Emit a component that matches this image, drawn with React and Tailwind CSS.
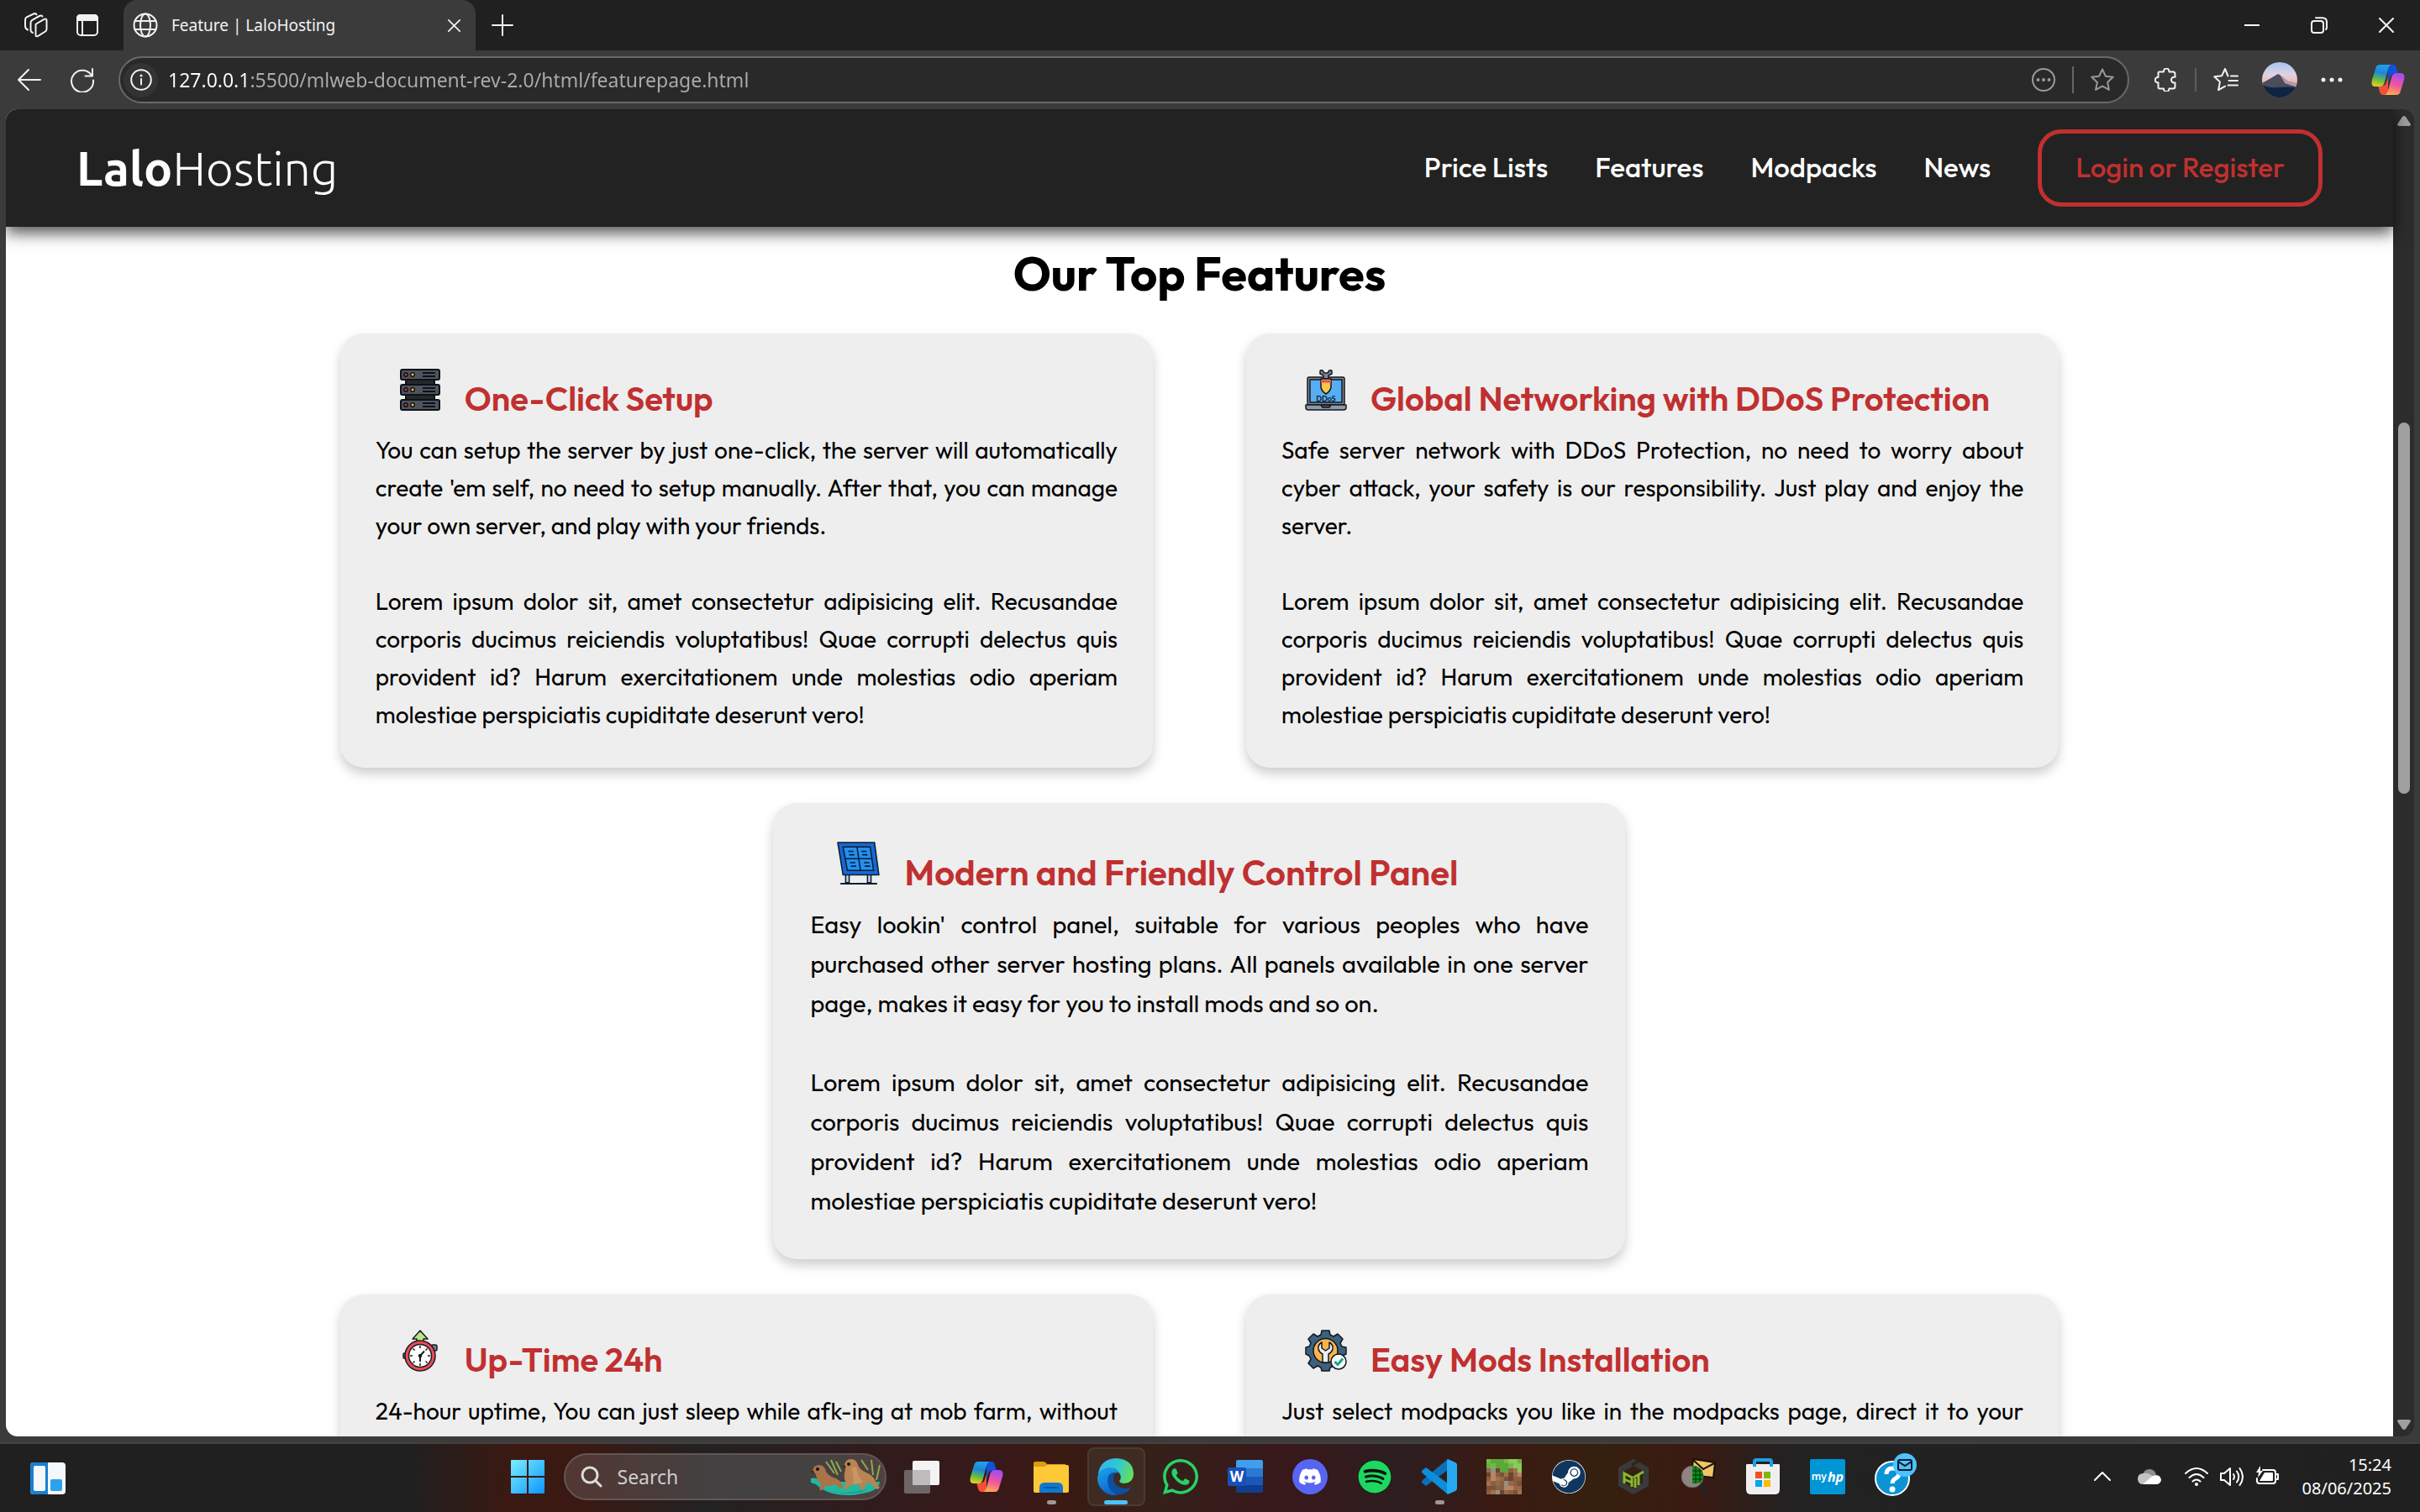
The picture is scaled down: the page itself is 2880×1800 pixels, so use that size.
import React from "react";
import { FaDiscord, FaSpotify, FaWhatsapp, FaSteam } from "react-icons/fa";

const LOREM =
  "Lorem ipsum dolor sit, amet consectetur adipisicing elit. Recusandae corporis ducimus reiciendis voluptatibus! Quae corrupti delectus quis provident id? Harum exercitationem unde molestias odio aperiam molestiae perspiciatis cupiditate deserunt vero!";

/* ---------- line icons of the browser ---------- */

function Line({ size = 28, box = 28, sw = 2, className = "", children }) {
  return (
    <svg
      width={size}
      height={size}
      viewBox={`0 0 ${box} ${box}`}
      fill="none"
      stroke="currentColor"
      strokeWidth={sw}
      strokeLinecap="round"
      strokeLinejoin="round"
      className={className}
      aria-hidden="true"
    >
      {children}
    </svg>
  );
}

const Workspaces = () => (
  <Line size={30} box={30}>
    <path d="M15 13.500 24.500 7.800q3-1.300 3 1.500v10.200q0 2-1.600 3l-8.200 5.200q-3.200 1.800-3.200-1.500V15q0-1 .500-1.500z" />
    <path d="M11 24q-2.500-.8-2.500-3.500V12q0-2 1.800-3.200L19 4q2.200-1 3.500.500" />
    <path d="M5 20.500Q2 19 2 16V8.500q0-2 1.800-3.200L12 1.500q2.500-1 3.500.700" />
  </Line>
);

const TabActions = () => (
  <Line size={28}>
    <rect x="2" y="2" width="24" height="24" rx="4" />
    <path d="M2 8V6q0-4 4-4h16q4 0 4 4v2z" fill="currentColor" />
    <path d="M8 8v18" />
  </Line>
);

const Globe = () => (
  <Line size={30} box={30}>
    <circle cx="15" cy="15" r="13.500" />
    <ellipse cx="15" cy="15" rx="6" ry="13.500" />
    <path d="M2.500 10h25M2.500 20h25" />
  </Line>
);

const Cross = ({ size = 18 }) => (
  <Line size={size} box={18}>
    <path d="M1 1l16 16M17 1 1 17" />
  </Line>
);

const Plus = () => (
  <Line size={26} box={26}>
    <path d="M13 1v24M1 13h24" />
  </Line>
);

const Restore = () => (
  <Line size={20} box={20}>
    <rect x="1" y="5" width="14" height="14" rx="3" />
    <path d="M6 1.200h8q5 0 5 5v6.800q0 1-1 2" />
  </Line>
);

const Back = () => (
  <Line size={30} box={30}>
    <path d="M28 15H2M14 3 2 15l12 12" />
  </Line>
);

const Reload = () => (
  <Line size={30} box={30}>
    <path d="M26.500 10.500A13 13 0 1 0 28 15.500M27 2v8.500h-8.500" />
  </Line>
);

const Info = () => (
  <Line size={26} box={26}>
    <circle cx="13" cy="13" r="11.800" />
    <path d="M13 12v6.500" />
    <circle cx="13" cy="8" r=".6" fill="currentColor" />
  </Line>
);

const MoreCircle = () => (
  <Line>
    <circle cx="14" cy="14" r="13" />
    <g fill="currentColor" stroke="none">
      <circle cx="7.500" cy="14" r="2" />
      <circle cx="14" cy="14" r="2" />
      <circle cx="20.500" cy="14" r="2" />
    </g>
  </Line>
);

const Star = () => (
  <Line>
    <path d="M14 1.500l3.800 8.200 8.900 1.100-6.600 6.100 1.800 9L14 21.500l-7.900 4.400 1.800-9L1.300 10.800l8.900-1.100z" />
  </Line>
);

const Extensions = () => (
  <Line>
    <path d="M6 4.500h5v-.7a3.200 3.200 0 0 1 6.400 0v.7H22q2.500 0 2.500 2.500v3.800h-1.200a3.300 3.300 0 0 0 0 6.600h1.200V22q0 2.500-2.500 2.500h-4.600v.4a3.200 3.200 0 0 1-6.400 0v-.4H6q-1.500 0-1.500-2v-5.200h-.6a3.200 3.200 0 0 1 0-6.400h.6V6q0-1.500 1.500-1.500z" />
  </Line>
);

const Favorites = () => (
  <Line size={30} box={30}>
    <path d="M17.500 10.500 14 2l-3.800 8.200-8.900 1.100 6.600 6.100-1.800 9.800 8-4.500" />
    <path d="M21 10.500h8M18.500 16h10.500M17.500 21.500H29" />
  </Line>
);

const Dots = () => (
  <svg width="26" height="6" viewBox="0 0 26 6" fill="currentColor" aria-hidden="true">
    <circle cx="3" cy="3" r="2.500" />
    <circle cx="13" cy="3" r="2.500" />
    <circle cx="23" cy="3" r="2.500" />
  </svg>
);

function Avatar() {
  return (
    <svg width="42" height="42" viewBox="0 0 42 42" aria-hidden="true">
      <defs>
        <linearGradient id="sky" x1="0" y1="0" x2="0" y2="1">
          <stop offset="0" stopColor="#a5c4f0" />
          <stop offset=".35" stopColor="#dfd3e2" />
          <stop offset=".6" stopColor="#f0b5b4" />
        </linearGradient>
        <clipPath id="disc">
          <circle cx="21" cy="21" r="21" />
        </clipPath>
      </defs>
      <g clipPath="url(#disc)">
        <path d="M0 0h42v42H0z" fill="url(#sky)" />
        <path d="M0 25 9 20l10-6 2 1 10 8 6 1 5 2v16H0z" fill="#4b4c5c" />
        <path d="m21 15 10 8 6 1 5 2v4l-9-3-6-2-2-4z" fill="#b79aa3" />
        <path d="M0 27q10 4 18 3t24 0v12H0z" fill="#0f2444" />
      </g>
    </svg>
  );
}

function Copilot({ size = 40, id }) {
  return (
    <svg width={size} height={size} viewBox="0 0 40 40" aria-hidden="true">
      <defs>
        <linearGradient id={id + "a"} x1=".4" y1="0" x2=".2" y2="1">
          <stop offset="0" stopColor="#1fa0ee" />
          <stop offset=".35" stopColor="#1f86d8" />
          <stop offset=".65" stopColor="#5dba4c" />
          <stop offset="1" stopColor="#f7cf10" />
        </linearGradient>
        <linearGradient id={id + "b"} x1=".6" y1="0" x2=".3" y2="1">
          <stop offset="0" stopColor="#a04df5" />
          <stop offset=".5" stopColor="#f0559a" />
          <stop offset="1" stopColor="#ffae4e" />
        </linearGradient>
      </defs>
      <path d="M20 2h6q3 0 4 4l2 7h-6q-3 0-4 4l-2 6z" fill="#1450d8" />
      <path d="M20 38h-6q-3 0-4-4l-2-7h6q3 0 4-4l2-6z" fill="#f2503a" />
      <path d="M10 2h14q-3 1-4 5l-4 15q-1 6-6 6H5q-6 0-4-8L5 7q1-5 5-5z" fill={`url(#${id}a)`} />
      <path d="M30 38H16q3-1 4-5l4-15q1-6 6-6h5q6 0 4 8l-4 13q-1 5-5 5z" fill={`url(#${id}b)`} />
    </svg>
  );
}

/* ---------- feature illustrations ---------- */

function Rack({ y }) {
  return (
    <g>
      <rect x="2" y={y} width="46" height="12" rx="2" fill="#4c5361" stroke="#101114" strokeWidth="2" />
      <circle cx="8" cy={y + 6} r="2.200" fill="#e02c42" stroke="#101114" strokeWidth="1.500" />
      <circle cx="16" cy={y + 6} r="2.200" fill="#f5cf2c" stroke="#101114" strokeWidth="1.500" />
      <path d={`M28 ${y + 4}h15M28 ${y + 8}h15`} stroke="#101114" strokeWidth="1.800" />
    </g>
  );
}

const ServerArt = ({ size }) => (
  <svg width={size} height={size} viewBox="0 0 50 50" aria-hidden="true">
    <path d="M8 12h34v26H8z" fill="#25282e" stroke="#101114" strokeWidth="2" />
    <Rack y={1} />
    <Rack y={19} />
    <Rack y={37} />
  </svg>
);

const LaptopArt = ({ size }) => (
  <svg width={size} height={size} viewBox="0 0 50 50" stroke="#14181f" strokeWidth="1.500" strokeLinejoin="round" aria-hidden="true">
    <rect x="3" y="10" width="44" height="33" rx="2" fill="#7d8796" />
    <path d="M6 13h38v27H6z" fill="#58aef5" />
    <path d="M1 43h48v3q0 3-3 3H4q-3 0-3-3z" fill="#8f99a8" />
    <path d="M19 43h12l-2 3h-8z" fill="#4f5867" />
    <path d="M18 3q0-2 3-1l2 3h4l2-3q3-1 3 1v3l-4 2v4h-6V8l-4-2z" fill="#7d8796" />
    <path d="M19 12h12v10q-1 5-6 8-5-3-6-8z" fill="#f8c64b" />
    <path d="M19 15h12" stroke="#e04f4f" strokeWidth="3" />
    <text x="25" y="38.500" textAnchor="middle" fontSize="9" fontWeight="700" fill="#14181f" stroke="none" className="font-['Lato',sans-serif]">
      DDoS
    </text>
  </svg>
);

const PanelArt = ({ size }) => (
  <svg width={size} height={size} viewBox="0 0 50 50" stroke="#0c1c33" strokeWidth="1.500" strokeLinejoin="round" aria-hidden="true">
    <path d="M10 37v10h4V37M35 37v10h4V37" fill="#c4d3e2" />
    <path d="M4 48h42" strokeWidth="2" />
    <path d="M1 1h42l5 37H7z" fill="#1769d2" />
    <path d="M7 6h31l4 27H12z" fill="#2390f0" />
    <path d="m23 6 4 27M9.500 19.500h30.500" />
    <path d="M13 11h6M14 15h6M28 11h6M29 15h6M15 24h6M16 28h6M31 24h6M32 28h6" />
  </svg>
);

const ClockArt = ({ size }) => (
  <svg width={size} height={size} viewBox="0 0 50 50" stroke="#1b1b1f" strokeWidth="1.500" strokeLinejoin="round" aria-hidden="true">
    <rect x="38" y="18" width="7" height="7" rx="2" fill="#77808c" />
    <rect x="5" y="28" width="5" height="6" rx="1" fill="#77808c" />
    <path d="m25 1 9 10h-5v4h-8v-4h-5z" fill="#b7e687" />
    <circle cx="25" cy="31" r="18" fill="#e94b57" />
    <circle cx="25" cy="31" r="13.500" fill="#fff" />
    <path d="M25 19v3M25 40v3M13 31h3M34 31h3M16.500 22.500l2 2M31.500 37.500l2 2M33.500 22.500l-2 2M16.500 39.500l2-2" />
    <path d="M25 38v-7l5-5.500" strokeWidth="2" fill="none" />
    <circle cx="25" cy="31" r="1.500" fill="#1b1b1f" />
  </svg>
);

const GearArt = ({ size }) => (
  <svg width={size} height={size} viewBox="0 0 50 50" stroke="#14181f" strokeWidth="1.500" strokeLinejoin="round" aria-hidden="true">
    <path
      d="M20 1h9l1 5 4 2 5-3 6 6-3 5 2 4 5 1v8l-5 2-2 4 3 5-6 6-5-3-4 2-1 4h-9l-1-4-4-2-5 3-6-6 3-5-2-4-4-2v-8l4-1 2-4-3-5 6-6 5 3 4-2z"
      fill="#3b617f"
    />
    <circle cx="24.500" cy="25" r="14.500" fill="#f9b44c" />
    <path d="M20 15v7l4.500 3 4.500-3v-7q5 3 4 8-1 4-5 6v10h-7V29q-4-2-5-6-1-5 4-8z" fill="#e9f0fa" />
    <circle cx="40" cy="38" r="9" fill="#f4f8fd" />
    <path d="m35.500 38 3.500 3.500 6-7" stroke="#17a77b" strokeWidth="3" fill="none" />
  </svg>
);

/* ---------- taskbar pictures ---------- */

const Widgets = () => (
  <svg width="42" height="38" viewBox="0 0 42 38" aria-hidden="true">
    <rect width="42" height="38" rx="4" fill="#f4f8fb" />
    <path d="M4 0h17v38H4q-4 0-4-4V4q0-4 4-4z" fill="#1c7fd0" />
    <rect x="4" y="4" width="14" height="30" rx="2" fill="#f4f8fb" />
    <rect x="24" y="20" width="14" height="14" rx="2" fill="#2aa2ee" />
  </svg>
);

const WindowsLogo = () => (
  <svg width="42" height="42" viewBox="0 0 42 42" aria-hidden="true">
    <defs>
      <linearGradient id="win" x1="0" y1="0" x2="42" y2="42" gradientUnits="userSpaceOnUse">
        <stop stopColor="#7cf0ff" />
        <stop offset="1" stopColor="#0a94ff" />
      </linearGradient>
    </defs>
    <path
      d="M2 1h18v19H1V2q0-1 1-1zM22 1h18q1 0 1 1v18H22zM1 22h19v19H2q-1 0-1-1zM22 22h19v18q0 1-1 1H22z"
      fill="url(#win)"
    />
  </svg>
);

const SeaLions = () => (
  <svg width="86" height="44" viewBox="0 0 86 44" aria-hidden="true">
    <path d="M30 18 20 4M34 20 26 2M38 16 32 4M70 14 62 2M76 20 74 2M80 26l4-18" stroke="#8ea854" strokeWidth="2" fill="none" />
    <path d="M2 24q6-2 12 4h70q0 8-12 12-28 8-50 0-8-3-14-9l-6-2z" fill="#22b8a0" />
    <path d="M14 37q30 8 56 0-20 9-56 0z" fill="#128478" />
    <path d="M4 15q1-7 8-7 6 0 8 8 4 6 12 8 8 4 8 11l-3 1-6-5q-6 3-11 2l-5 5q-4 1-2-3l1-4q-6-6-6-12z" fill="#a87448" />
    <path d="M42 8q1-7 8-7 6 0 8 7 2 6 12 10 8 4 10 12l4 5q-2 3-5 1l-7-7-5 2-1 6q-4 2-5-2l-2-4-9 1-6 5q-4 1-2-3l2-4q-4-8-1-16z" fill="#b98352" />
    <path d="M50 12q4 12 2 18 8 2 12-2-6-6-8-18z" fill="#d2a272" opacity=".6" />
    <circle cx="10" cy="13" r="2" fill="#141210" />
    <circle cx="47" cy="7" r="2" fill="#141210" />
    <circle cx="4" cy="16" r="1.500" fill="#3b2618" />
    <circle cx="42" cy="10" r="1.500" fill="#3b2618" />
  </svg>
);

const TaskView = () => (
  <svg width="42" height="42" viewBox="0 0 42 42" aria-hidden="true">
    <rect x="0" y="13" width="31" height="28" rx="2" fill="#6c6766" />
    <rect x="10" y="2" width="32" height="29" rx="2" fill="#f3f3f3" />
    <path d="M10 13h21v18H12q-2 0-2-2z" fill="#bdbbbb" />
  </svg>
);

const Explorer = () => (
  <svg width="42" height="42" viewBox="0 0 42 42" aria-hidden="true">
    <path d="M0 5q0-2 2-2h10q2 0 4 3h22v8H0z" fill="#e09a0b" />
    <path d="M0 9h12q2 0 4-2h24q2 0 2 2v29q0 2-2 2H2q-2 0-2-2z" fill="#fdc936" />
    <path d="M7 40V34q0-6 6-6h16q6 0 6 6v6z" fill="#0f78cf" />
    <path d="M13 34h16" stroke="#0b58a3" strokeWidth="2" strokeLinecap="round" />
  </svg>
);

const Edge = () => (
  <svg width="44" height="44" viewBox="0 0 44 44" aria-hidden="true">
    <defs>
      <linearGradient id="eg1" x1="0" y1=".3" x2="1" y2=".6">
        <stop stopColor="#35b5f1" />
        <stop offset=".5" stopColor="#2fc8d0" />
        <stop offset="1" stopColor="#66e05a" />
      </linearGradient>
      <linearGradient id="eg2" x1="0" y1="0" x2=".4" y2="1">
        <stop stopColor="#1fa5e8" />
        <stop offset="1" stopColor="#0a68cf" />
      </linearGradient>
    </defs>
    <path d="M1 18Q4 1 22 0q20 1 21 18 0 11-11 12-5 0-6-3 3-3 1-8-4-7-14-6Q5 14 1 20z" fill="url(#eg1)" />
    <path d="M0 23q2-11 14-12 9 0 12 6-9-1-11 9-1 10 9 17-5 2-10 0Q0 37 0 23z" fill="url(#eg2)" />
    <path d="M20 17q-8 0-8 11 1 10 10 15 12 2 18-9-1 0-2 1-5 2-10 0-9-3-9-11 0-4 3-7z" fill="#0d4fa0" />
  </svg>
);

const Word = () => (
  <svg width="42" height="42" viewBox="0 0 42 42" aria-hidden="true">
    <path d="M12 1h28q2 0 2 2v8H10V3q0-2 2-2z" fill="#3f9fea" />
    <path d="M10 11h32v10H10z" fill="#2a78d2" />
    <path d="M10 21h32v10H10z" fill="#1a57b8" />
    <path d="M10 31h32v7q0 2-2 2H12q-2 0-2-2z" fill="#103e8f" />
    <rect y="10" width="22" height="22" rx="2" fill="#1751b5" />
    <text x="11" y="27" fontSize="17" fontWeight="700" textAnchor="middle" fill="#fff" className="font-['Open_Sans',sans-serif]">
      W
    </text>
  </svg>
);

const VSCode = () => (
  <svg width="42" height="42" viewBox="0 0 42 42" aria-hidden="true">
    <path d="M31 0v13L5 32l-5-4q0-2 1-3z" fill="#0a70b8" />
    <path d="M31 42V29L5 10l-5 4q0 2 1 3z" fill="#0b8fd8" />
    <path d="m31 0 9 4q2 1 2 3v28q0 2-2 3l-9 4q-1-1-1-2V2q0-1 1-2z" fill="#27a8f2" />
  </svg>
);

const GRASS = ["75b84a", "5da63a", "8ac95a", "5da63a", "75b84a", "6cb044", "5da63a", "8ac95a"];
const DIRT = ["8a5f40", "a3714c", "6b452e", "b98562", "7a5238", "8a5f40", "96684a"];
const Minecraft = () => (
  <svg width="42" height="42" viewBox="0 0 8 8" shapeRendering="crispEdges" aria-hidden="true">
    {Array.from({ length: 64 }, (_, i) => {
      const x = i % 8;
      const y = Math.floor(i / 8);
      const green = y < 2 || (y === 2 && (x === 3 || x === 4 || x === 7));
      const stone = (x === 1 && y === 2) || (x === 4 && y === 5) || (x === 2 && y === 7);
      const c = stone ? "93908c" : green ? GRASS[(x * 3 + y * 5) % 8] : DIRT[(x * 5 + y * 3 + ((x * y) % 4)) % 7];
      return <rect key={i} x={x} y={y} width="1" height="1" fill={"#" + c} />;
    })}
  </svg>
);

const Hexagon = () => (
  <svg width="38" height="42" viewBox="0 0 38 42" aria-hidden="true">
    <path d="M19 0 37 10v22L19 42 1 32V10z" fill="#393a3b" />
    <path d="m19 8 11 6v14l-11 7-11-7V14z" fill="#36200f" />
    <path d="M26 2 17 7" stroke="#36200f" strokeWidth="3" />
    <path d="M8 29V17l9 5v11M8 24l9 4M19 22l12-7M25 19v12M21 23v11" stroke="#86b82f" strokeWidth="3" fill="none" />
  </svg>
);

const MailSearch = () => (
  <svg width="42" height="44" viewBox="0 0 42 44" aria-hidden="true">
    <path d="m15 1 26 4-2 18-26-3z" fill="#f0c567" stroke="#17130c" strokeWidth="2" />
    <path d="m15 2 12 11L40 6" fill="none" stroke="#17130c" strokeWidth="2" />
    <path d="m24 31 9 13" stroke="#222" strokeWidth="5" />
    <circle cx="14" cy="22" r="13" fill="#8e8580" stroke="#5f5a57" />
    <path d="M14 9q12 1 13 13-2 10-13 8z" fill="#0b8b1c" />
    <path d="M18 10v20M23 12v17M14 15h12M14 20h13M14 25h12" stroke="#042c08" />
  </svg>
);

const Store = () => (
  <svg width="40" height="44" viewBox="0 0 40 44" aria-hidden="true">
    <path d="M0 8q0-1 1-1h38q1 0 1 1v29q0 6-6 6H6q-6 0-6-6z" fill="#efefef" />
    <path d="M10 10V4q0-2 2-2h16q2 0 2 2v6" fill="none" stroke="#1e9fe8" strokeWidth="4" />
    <path d="M11 16h8v8h-8z" fill="#f25022" />
    <path d="M21 16h8v8h-8z" fill="#7fba00" />
    <path d="M11 26h8v8h-8z" fill="#00a4ef" />
    <path d="M21 26h8v8h-8z" fill="#ffb900" />
  </svg>
);

const MyHp = () => (
  <span className="flex size-[42px] items-center justify-center gap-px rounded-xs bg-[#0096d6] text-xs leading-none font-semibold text-white">
    <span>my</span>
    <i className="text-base leading-none font-bold">hp</i>
  </span>
);

const Help = () => (
  <svg width="54" height="56" viewBox="0 0 54 56" className="relative -top-1 left-1" aria-hidden="true">
    <circle cx="23" cy="34" r="20" fill="#0a94d6" stroke="#fff" strokeWidth="2" />
    <path d="M16 29q0-7 7-7 8 0 8 6 0 4-4 6-4 2-4 6" stroke="#fff" strokeWidth="5" fill="none" />
    <circle cx="23" cy="47" r="3.500" fill="#fff" />
    <circle cx="38" cy="18" r="14" fill="#4cc2ff" />
    <rect x="30" y="12" width="16" height="12" rx="2" fill="none" stroke="#0b1a26" strokeWidth="2" />
    <path d="m30 14 8 5 8-5" fill="none" stroke="#0b1a26" strokeWidth="2" />
  </svg>
);

const Discord = () => (
  <span className="flex size-[42px] items-center justify-center rounded-full bg-[#5865f2]">
    <FaDiscord className="size-7 text-white" />
  </span>
);
const Spotify = () => (
  <span className="flex size-10 items-center justify-center rounded-full bg-[#101410]">
    <FaSpotify className="size-10 text-[#1ed760]" />
  </span>
);
const Steam = () => (
  <span className="flex size-10 items-center justify-center rounded-full bg-white">
    <FaSteam className="size-10 text-[#10365f]" />
  </span>
);

const APPS = [
  ["Task view", <TaskView />],
  ["Copilot", <Copilot id="tb" />],
  ["File Explorer", <Explorer />, "open"],
  ["Microsoft Edge", <Edge />, "active"],
  ["WhatsApp", <FaWhatsapp className="size-12 text-[#25d366]" />],
  ["Word", <Word />],
  ["Discord", <Discord />],
  ["Spotify", <Spotify />],
  ["Visual Studio Code", <VSCode />, "open"],
  ["Minecraft", <Minecraft />],
  ["Steam", <Steam />],
  ["Mod tools", <Hexagon />],
  ["Mail search", <MailSearch />],
  ["Microsoft Store", <Store />],
  ["myHP", <MyHp />],
  ["Help", <Help />],
];

/* ---------- browser frame ---------- */

function TabStrip() {
  return (
    <div className="flex h-[60px] shrink-0 items-stretch bg-[#202020] text-[#f2f2f2]">
      <div className="flex w-[147px] items-center gap-8 pl-7">
        <button aria-label="Workspaces"><Workspaces /></button>
        <button aria-label="Tab actions"><TabActions /></button>
      </div>
      <div className="flex w-[419px] items-center rounded-t-2xl bg-[#3b3b3b] pr-3 pl-[11px]">
        <Globe />
        <span className="ml-4 grow text-[19px]">Feature | LaloHosting</span>
        <button aria-label="Close tab" className="flex size-7 items-center justify-center"><Cross size={15} /></button>
      </div>
      <button aria-label="New tab" className="flex w-16 items-center justify-center"><Plus /></button>
      <div className="ml-auto flex items-stretch">
        <button aria-label="Minimize" className="flex w-20 items-center justify-center"><span className="h-0.5 w-[18px] bg-white" /></button>
        <button aria-label="Restore" className="flex w-20 items-center justify-center"><Restore /></button>
        <button aria-label="Close" className="flex w-20 items-center justify-center"><Cross /></button>
      </div>
    </div>
  );
}

function Toolbar() {
  return (
    <div className="flex h-[70px] shrink-0 items-center bg-[#3b3b3b] pr-[18px] pl-5 text-[#f2f2f2]">
      <button aria-label="Back"><Back /></button>
      <button aria-label="Refresh" className="ml-[33px]"><Reload /></button>
      <div className="ml-7 flex h-14 grow items-center rounded-full border-2 border-[#696969] bg-[#292929] pr-4 pl-1">
        <button aria-label="Site information" className="flex size-[41px] items-center justify-center rounded-full bg-[#333]"><Info /></button>
        <input
          aria-label="Address"
          defaultValue="127.0.0.1:5500/mlweb-document-rev-2.0/html/featurepage.html"
          className="ml-3 min-w-0 grow bg-[linear-gradient(90deg,#fff_97px,#acacac_97px)] bg-clip-text text-[23px] text-transparent outline-none"
        />
        <button aria-label="Page options" className="text-[#9a9a9a]"><MoreCircle /></button>
        <span className="mx-5 h-8 w-0.5 bg-[#666]" />
        <button aria-label="Add to favorites" className="text-[#9a9a9a]"><Star /></button>
      </div>
      <button aria-label="Extensions" className="ml-[30px]"><Extensions /></button>
      <span className="mx-5 h-7 w-0.5 bg-[#5e5e5e]" />
      <button aria-label="Favorites"><Favorites /></button>
      <button aria-label="Profile" className="ml-7"><Avatar /></button>
      <button aria-label="Settings and more" className="ml-7"><Dots /></button>
      <button aria-label="Copilot sidebar" className="ml-[34px]"><Copilot id="sb" /></button>
    </div>
  );
}

function Scrollbar() {
  return (
    <div className="flex w-[25px] shrink-0 flex-col items-center bg-[#2c2c2c] py-2">
      <svg width="16" height="12" viewBox="0 0 16 12" fill="#9f9f9f" aria-hidden="true">
        <path d="M6 1q2-2 4 0l6 9q0 2-2 2H2q-2 0-2-2z" />
      </svg>
      <div className="grow-[353]" />
      <div className="w-3.5 grow-[443] rounded-full bg-[#9f9f9f]" />
      <div className="grow-[745]" />
      <svg width="16" height="12" viewBox="0 0 16 12" fill="#9f9f9f" aria-hidden="true">
        <path d="M6 11q2 2 4 0l6-9q0-2-2-2H2Q0 0 0 2z" />
      </svg>
    </div>
  );
}

/* ---------- web page ---------- */

function SiteHeader() {
  return (
    <header className="relative z-10 flex h-[140px] shrink-0 items-center justify-between bg-[#222] px-[84px] text-white shadow-[0_7px_18px_rgba(0,0,0,0.7)]">
      <a href="#home" className="font-['Ubuntu','Noto_Sans',sans-serif] text-[57px] leading-none font-light">
        <b className="font-bold">Lalo</b>Hosting
      </a>
      <nav className="flex items-center gap-14 text-[33px] font-medium">
        <a href="#price">Price Lists</a>
        <a href="#features">Features</a>
        <a href="#modpacks">Modpacks</a>
        <a href="#news">News</a>
        <a href="#login" className="flex h-[92px] items-center rounded-[28px] border-5 border-[#c03030] px-10 text-[#c03030]">
          Login or Register
        </a>
      </nav>
    </header>
  );
}

function Card({ art: Art, title, text, more, large = false }) {
  return (
    <article
      className={
        "rounded-[28px] bg-[#eee] text-justify text-black shadow-[0_7px_14px_rgba(0,0,0,0.2)] " +
        (large
          ? "w-[1014px] px-11 pt-[46px] pb-[46px] text-[29px] leading-[47px]"
          : "min-h-[517px] px-[42px] pt-[42px] pb-10 text-[28px] leading-[45px]")
      }
    >
      <h3
        className={
          "flex items-baseline text-left font-semibold text-[#c03030] " +
          (large ? "mb-3 gap-7 pl-8 text-[42px] leading-[53px]" : "mb-3.5 gap-7 pl-7 text-[40px] leading-[50px]")
        }
      >
        <Art size={large ? 52 : 50} />
        {title}
      </h3>
      <p className={more ? "" : "[text-align-last:justify]"}>{text}</p>
      {more && <p className={large ? "mt-[47px]" : "mt-[45px]"}>{more}</p>}
    </article>
  );
}

function Page() {
  return (
    <div className="flex min-w-0 grow flex-col bg-white font-['Outfit','Lato',sans-serif]">
      <SiteHeader />
      <main className="flex min-h-0 grow flex-col items-center overflow-hidden pt-5">
        <h2 className="mb-9 text-[56px] leading-[71px] font-bold text-black">Our Top Features</h2>
        <div className="grid w-[72%] grid-cols-2 gap-x-[111px]">
          <Card
            art={ServerArt}
            title="One-Click Setup"
            text="You can setup the server by just one-click, the server will automatically create 'em self, no need to setup manually. After that, you can manage your own server, and play with your friends."
            more={LOREM}
          />
          <Card
            art={LaptopArt}
            title="Global Networking with DDoS Protection"
            text="Safe server network with DDoS Protection, no need to worry about cyber attack, your safety is our responsibility. Just play and enjoy the server."
            more={LOREM}
          />
          <div className="col-span-2 my-[42px] flex justify-center">
            <Card
              large
              art={PanelArt}
              title="Modern and Friendly Control Panel"
              text="Easy lookin' control panel, suitable for various peoples who have purchased other server hosting plans. All panels available in one server page, makes it easy for you to install mods and so on."
              more={LOREM}
            />
          </div>
          <Card
            art={ClockArt}
            title="Up-Time 24h"
            text="24-hour uptime, You can just sleep while afk-ing at mob farm, without"
          />
          <Card
            art={GearArt}
            title="Easy Mods Installation"
            text="Just select modpacks you like in the modpacks page, direct it to your"
          />
        </div>
      </main>
    </div>
  );
}

/* ---------- taskbar ---------- */

function TaskButton({ label, state, children }) {
  return (
    <button aria-label={label} className="flex w-[77px] justify-center py-1">
      <span
        className={
          "relative flex h-[70px] w-[69px] items-center justify-center rounded-lg " +
          (state === "active" ? "border-2 border-[#4a3a30] bg-[#3e2c22]" : "")
        }
      >
        {children}
        {state === "active" && <span className="absolute bottom-0 h-[5px] w-7 rounded-full bg-[#4cc2ff]" />}
        {state === "open" && <span className="absolute bottom-0.5 h-[5px] w-[11px] rounded-full bg-[#a09694]" />}
      </span>
    </button>
  );
}

function Taskbar() {
  return (
    <footer className="grid h-[83px] shrink-0 grid-cols-[1fr_auto_1fr] items-stretch border-t-2 border-[#44403f] bg-[linear-gradient(90deg,#202020_0%,#212020_17%,#3a1912_21%,#3a1912_24%,#222_29%,#2f1c1d_35%,#38191a_41%,#391a13_44%,#35201a_48%,#38181b_53%,#2d1e20_58%,#3a1a12_62%,#35200f_66%,#3a1a12_70%,#222_74%,#202020_100%)] text-white">
      <button aria-label="Widgets" className="flex w-[114px] items-center justify-center"><Widgets /></button>
      <div className="flex">
        <TaskButton label="Start"><WindowsLogo /></TaskButton>
        <label className="mx-1 mt-[11px] mb-3.5 flex w-[384px] items-center rounded-full border-2 border-[#625654] bg-[linear-gradient(90deg,#533733,#434141_45%,#434141_75%,#4f4241)] pr-1 pl-[18px]">
          <Line size={26} box={26} sw={3} className="shrink-0 text-[#dcdcdc]">
            <circle cx="11" cy="11" r="9" />
            <path d="m18 18 6 6" />
          </Line>
          <input aria-label="Search" placeholder="Search" className="ml-[18px] w-0 grow bg-transparent text-[23px] outline-none placeholder:text-[#d0cccb]" />
          <SeaLions />
        </label>
        {APPS.map(([label, icon, state]) => (
          <TaskButton key={label} label={label} state={state}>{icon}</TaskButton>
        ))}
      </div>
      <div className="flex items-center justify-end pr-[34px] pb-1">
        <button aria-label="Hidden icons">
          <Line size={20} box={20} sw={2}>
            <path d="m1 14 9-9 9 9" />
          </Line>
        </button>
        <svg width="28" height="20" viewBox="0 0 28 20" className="ml-8" aria-hidden="true">
          <circle cx="14" cy="9" r="8" fill="#8f8f8f" />
          <path d="M7 6q-7 0-7 7 1 6 6 6l14-8Q14 5 7 6z" fill="#c4c4c4" />
          <path d="M6 19 18 9q9-3 10 5-1 5-6 5z" fill="#fff" />
        </svg>
        <button aria-label="Network, sound and battery" className="ml-7 flex items-center gap-3.5">
          <Line size={28}>
            <path d="M1 10Q14-2 27 10M5.500 15q8.500-8 17 0M9.500 19.500q4.500-4 9 0" />
            <circle cx="14" cy="23" r="2" fill="currentColor" stroke="none" />
          </Line>
          <Line size={28}>
            <path d="M1 10v8h4l7 6V4l-7 6zM16 11q2 3 0 6M20 7.500q4.500 6.500 0 13M23.500 4q7 10 0 20" />
          </Line>
          <Line size={28}>
            <path d="M9 6h12q3 0 3 3v10q0 3-3 3H5q-3 0-3-3v-3M24 11h3v6h-3" />
            <path d="M11 9h9q1 0 1 1v8q0 1-1 1H5z" fill="currentColor" stroke="none" />
            <path d="M6 1 1 9h3l-1 6 6-8H6z" fill="currentColor" stroke="none" />
          </Line>
        </button>
        <time className="ml-7 text-right text-xl leading-7">
          15:24
          <br />
          08/06/2025
        </time>
      </div>
    </footer>
  );
}

export default function App() {
  return (
    <div className="flex h-screen flex-col overflow-hidden bg-[#3b3b3b] font-['Noto_Sans','Open_Sans',sans-serif]">
      <TabStrip />
      <Toolbar />
      <div className="mr-[7px] mb-[7px] ml-[7px] flex min-h-0 grow overflow-hidden rounded-[14px]">
        <Page />
        <Scrollbar />
      </div>
      <Taskbar />
    </div>
  );
}
